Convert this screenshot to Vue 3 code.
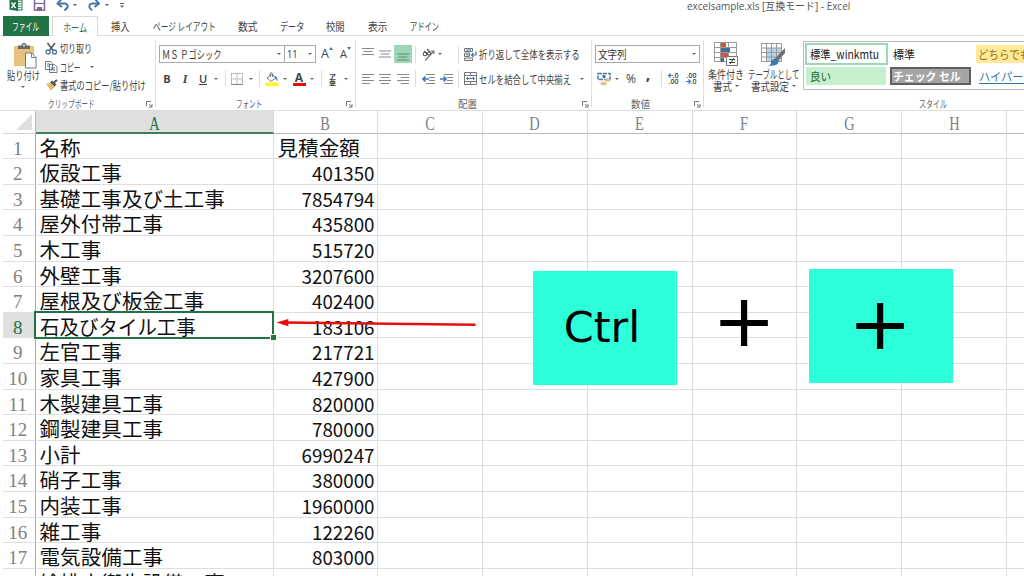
<script setup>
const vFit = {
  mounted(el, { value }) {
    const w = el.offsetWidth
    if (!w || !value) return
    el.style.transform = `scaleX(${value / w})`
    el.style.marginRight = `${value - w}px`
  }
}

const tabs = [
  { t: '挿入', w: 44, f: 19 },
  { t: 'ページ レイアウト', w: 84, f: 63 },
  { t: '数式', w: 44, f: 20 },
  { t: 'データ', w: 44, f: 24 },
  { t: '校閲', w: 43, f: 19 },
  { t: '表示', w: 42, f: 20 },
  { t: 'アドイン', w: 52, f: 29 }
]

const columns = ['A', 'B', 'C', 'D', 'E', 'F', 'G', 'H', '']
const rows = [
  ['名称', '見積金額'],
  ['仮設工事', '401350'],
  ['基礎工事及び土工事', '7854794'],
  ['屋外付帯工事', '435800'],
  ['木工事', '515720'],
  ['外壁工事', '3207600'],
  ['屋根及び板金工事', '402400'],
  ['石及びタイル工事', '183106', 156],
  ['左官工事', '217721'],
  ['家具工事', '427900'],
  ['木製建具工事', '820000'],
  ['鋼製建具工事', '780000'],
  ['小計', '6990247'],
  ['硝子工事', '380000'],
  ['内装工事', '1960000'],
  ['雑工事', '122260'],
  ['電気設備工事', '803000'],
  ['給排水衛生設備工事', '']
]
</script>

<template>
  <div class="app">
    <header class="titlebar">
      <svg class="quick" width="130" height="14" viewBox="0 0 130 14">
        <path d="M16 0h6v10h-6z" fill="#fff" stroke="#217346" />
        <path d="M17 2.500h4M17 5h4M17 7.500h4" stroke="#5a9a75" />
        <path d="M9.500 0H18v11L9.500 9.800z" fill="#217346" />
        <path d="M11.500 2.500l4 5.500M15.500 2.500l-4 5.500" stroke="#fff" stroke-width="1.300" />
        <path d="M34.500 -2h10v12h-10z" fill="#fff" stroke="#7d689b" stroke-width="1.500" />
        <path d="M35 3.500h9" stroke="#7d689b" stroke-width="1.300" />
        <path d="M37 7h5v4h-5z" fill="#7d689b" />
        <path d="M58 3.500h6.500q4 .5 3 4l-3 3" fill="none" stroke="#4275a8" stroke-width="1.900" />
        <path d="M61.500 -1L57.500 3.500l4.500 3.500" fill="none" stroke="#4275a8" stroke-width="1.900" />
        <path d="M98.500 3.500h-6q-4 .5 -3 4l2.500 3" fill="none" stroke="#4275a8" stroke-width="1.900" />
        <path d="M95 -1l4 4.500L94.500 7" fill="none" stroke="#4275a8" stroke-width="1.900" />
        <path d="M73 4h4l-2 2.300zM105 4h4l-2 2.300zM120 5.500h4l-2 2.300z" fill="#666" />
        <path d="M120 3.500h4" stroke="#666" />
      </svg>
      <div class="doc-title"><span v-fit="163" class="fit">excelsample.xls [互換モード] - Excel</span></div>
    </header>

    <nav class="tabs">
      <div class="tab file"><span v-fit="27" class="fit">ファイル</span></div>
      <div class="tab home"><span v-fit="24" class="fit">ホーム</span></div>
      <div v-for="tab in tabs" :key="tab.t" class="tab" :style="{ width: tab.w + 'px' }">
        <span v-fit="tab.f" class="fit">{{ tab.t }}</span>
      </div>
    </nav>

    <section class="ribbon">
      <div class="group clipboard">
        <div class="body clip-body">
          <div class="paste">
            <svg width="24" height="26" viewBox="0 0 24 26">
              <path d="M1 3h20v20H1z" fill="#e8c27c" />
              <path d="M5 2.500h3.500q0-2.500 2.500-2.500t2.500 2.500H17v3.500H5z" fill="#6a6a6a" />
              <circle cx="11" cy="2.500" r="1" fill="#fff" />
              <path d="M12.500 10h6l4.500 4.500V25H12.500z" fill="#fff" stroke="#777" />
              <path d="M18.500 10v4.500H23" fill="none" stroke="#777" />
            </svg>
            <span v-fit="33" class="fit">貼り付け</span>
            <i class="caret"></i>
          </div>
          <div class="clip-list">
            <div class="cmd">
              <svg width="13" height="13" viewBox="0 0 13 13">
                <path d="M2.500 1l6 8M10 1L4 9" stroke="#555" stroke-width="1.500" />
                <circle cx="3" cy="10" r="2" fill="none" stroke="#4275a8" stroke-width="1.300" />
                <circle cx="9.500" cy="10" r="2" fill="none" stroke="#4275a8" stroke-width="1.300" />
              </svg>
              <span v-fit="32" class="fit">切り取り</span>
            </div>
            <div class="cmd">
              <svg width="13" height="12" viewBox="0 0 13 12">
                <path d="M.5.5h5l2 2v6h-7zM4.500 3.500h5l2.500 2.500v5.500H4.500z" fill="#fff" stroke="#777" />
                <path d="M2 3h3M2 5h2M6 7h4M6 9h4" stroke="#4275a8" />
              </svg>
              <span v-fit="21" class="fit">コピー</span><i class="caret copy-caret"></i>
            </div>
            <div class="cmd">
              <svg width="13" height="12" viewBox="0 0 13 12">
                <path d="M1 5l4-1 5 4-4 3.500z" fill="#e8b965" />
                <path d="M5 3.500l2-2 4.500 4-2 2z" fill="#555" />
                <path d="M9 3.500L12 1" stroke="#555" stroke-width="2" />
              </svg>
              <span v-fit="86" class="fit">書式のコピー/貼り付け</span>
            </div>
          </div>
        </div>
        <div class="label"><span v-fit="47" class="fit">クリップボード</span></div>
        <svg class="launch" width="7" height="7" viewBox="0 0 7 7"><path d="M.5 5V.5H5M3 3l3 3M6 3v3H3" fill="none" stroke="#777" /></svg>
      </div>

      <div class="group font">
        <div class="body">
          <div class="row top">
            <div class="combo name"><span v-fit="59" class="fit">ＭＳ Ｐゴシック</span><i class="caret"></i></div>
            <div class="combo size"><span v-fit="11" class="fit">11</span><i class="caret"></i></div>
            <span class="grow">A<svg width="4" height="3" viewBox="0 0 4 3"><path d="M0 3l2-3 2 3z" fill="#4275a8" /></svg></span>
            <span class="shrink">A<svg width="4" height="3" viewBox="0 0 4 3"><path d="M0 0l2 3 2-3z" fill="#4275a8" /></svg></span>
          </div>
          <div class="row font-tools">
            <b>B</b><em>I</em><u>U</u><i class="caret"></i><i class="sep"></i>
            <svg width="12" height="12" viewBox="0 0 12 12"><path d="M.5 1v10M6 1v10M11.500 1v10M0 .5h12M0 6h12" fill="none" stroke="#aaa" stroke-dasharray="1.500 .5" /><path d="M0 11.400h12" stroke="#777" /></svg>
            <i class="caret"></i><i class="sep"></i>
            <svg width="14" height="14" viewBox="0 0 14 14">
              <path d="M2 6l5-4 3.500 4L6 9.500z" fill="#fff" stroke="#777" /><path d="M5 5V1.500Q6-.5 7.500 1.500V5" fill="none" stroke="#777" />
              <path d="M9.500 4q3 0 3 5l-2-2z" fill="#4275a8" /><path d="M.5 10.500h13v3.500H.5z" fill="#fff21e" />
            </svg>
            <i class="caret"></i>
            <span class="font-color">A</span>
            <i class="caret"></i><i class="sep"></i>
            <span class="ruby"><span>ア</span><span>亜</span></span>
            <i class="caret"></i>
          </div>
        </div>
        <div class="label"><span v-fit="26" class="fit">フォント</span></div>
        <svg class="launch" width="7" height="7" viewBox="0 0 7 7"><path d="M.5 5V.5H5M3 3l3 3M6 3v3H3" fill="none" stroke="#777" /></svg>
      </div>

      <div class="group align">
        <div class="body">
          <div class="row align-top">
            <svg width="12" height="14" viewBox="0 0 12 14"><path d="M0 1.500h12M1.500 4.500h9M0 7.500h12" stroke="#888" stroke-width="1.100" /></svg>
            <svg width="12" height="14" viewBox="0 0 12 14"><path d="M0 4h12M1.500 7h9M0 10h12" stroke="#888" stroke-width="1.100" /></svg>
            <div class="pressed"><svg width="12" height="14" viewBox="0 0 12 14"><path d="M0 7h12M1.500 10h9M0 13h12" stroke="#5f8a71" stroke-width="1.100" /></svg></div>
            <i class="sep"></i>
            <svg width="13" height="13" viewBox="0 0 13 13"><path d="M3 12.500L12 3M9 3h3v3" fill="none" stroke="#777" stroke-width="1.200" /><circle cx="3" cy="6" r="1.800" fill="none" stroke="#555" stroke-width="1.100" /><path d="M2 3l4 4M5 1l4 4" stroke="#555" stroke-width="1.100" /><circle cx="7" cy="5.500" r="1.500" fill="none" stroke="#555" /></svg>
            <i class="caret"></i><i></i><i class="sep"></i>
            <svg width="13" height="13" viewBox="0 0 13 13"><path d="M.5.500h8v3h-8zM.5 5h5v3.500h-5zM.5 10h8v2.500h-8z" fill="#eef3f8" stroke="#777" /><path d="M2 2h5M2 6.800h3" stroke="#4275a8" /><path d="M12 3.500v3.500H7.500M9.500 5l-2 2 2 2" fill="none" stroke="#4275a8" stroke-width="1.200" /></svg>
            <span class="left"><span v-fit="101" class="fit">折り返して全体を表示する</span></span>
          </div>
          <div class="row align-bottom">
            <svg width="12" height="12" viewBox="0 0 12 12"><path d="M0 1.500h12M0 4.500h8M0 7.500h12M0 10.500h8" stroke="#888" stroke-width="1.100" /></svg>
            <svg width="12" height="12" viewBox="0 0 12 12"><path d="M0 1.500h12M2 4.500h8M0 7.500h12M2 10.500h8" stroke="#888" stroke-width="1.100" /></svg>
            <svg width="12" height="12" viewBox="0 0 12 12"><path d="M0 1.500h12M4 4.500h8M0 7.500h12M4 10.500h8" stroke="#888" stroke-width="1.100" /></svg>
            <i class="sep"></i>
            <svg width="13" height="12" viewBox="0 0 13 12"><path d="M4 1.500h9M7 4.500h6M7 7.500h6M4 10.500h9" stroke="#888" /><path d="M7 6H1M3.500 3.500L1 6l2.500 2.500" fill="none" stroke="#3b78b5" stroke-width="1.600" /></svg>
            <svg width="13" height="12" viewBox="0 0 13 12"><path d="M4 1.500h9M7 4.500h6M7 7.500h6M4 10.500h9" stroke="#888" /><path d="M0 6h6M3.500 3.500L6 6 3.500 8.500" fill="none" stroke="#3b78b5" stroke-width="1.600" /></svg>
            <i class="sep"></i>
            <svg width="13" height="13" viewBox="0 0 13 13"><path d="M.5.5h12v12H.5zM.5 3.500h12M.5 9.500h12M6.500.5v3M6.500 9.500v3" fill="none" stroke="#777" /><path d="M2.500 6.500h8M4 5L2.500 6.500 4 8M9 5l1.500 1.500L9 8" fill="none" stroke="#4275a8" /></svg>
            <span class="left"><span v-fit="92" class="fit">セルを結合して中央揃え</span></span>
            <i class="caret"></i>
          </div>
        </div>
        <div class="label"><span v-fit="19" class="fit">配置</span></div>
        <svg class="launch" width="7" height="7" viewBox="0 0 7 7"><path d="M.5 5V.5H5M3 3l3 3M6 3v3H3" fill="none" stroke="#777" /></svg>
      </div>

      <div class="group number">
        <div class="body">
          <div class="row top"><div class="combo format"><span v-fit="29" class="fit">文字列</span><i class="caret"></i></div></div>
          <div class="row number-tools">
            <svg width="14" height="14" viewBox="0 0 14 14"><path d="M1 1.500h12v6H1z" fill="#fff" stroke="#4275a8" stroke-width="1.500" stroke-dasharray="4 1" /><circle cx="7" cy="4.500" r="1.700" fill="#4275a8" /><ellipse cx="10.500" cy="8" rx="2.800" ry="1.700" fill="#e9bd73" /><ellipse cx="6.500" cy="11.500" rx="3" ry="1.800" fill="#e9bd73" /></svg>
            <i class="caret"></i><span class="percent">%</span><span class="comma">,</span><i class="sep"></i>
            <span class="dec"><span><svg width="5" height="5" viewBox="0 0 5 5"><path d="M5 2.500H.5M2.500.5l-2 2 2 2" fill="none" stroke="#3b78b5" stroke-width="1.200" /></svg>.0</span><span>.00</span></span>
            <span class="dec"><span>.00</span><span><svg width="5" height="5" viewBox="0 0 5 5"><path d="M0 2.500h4.500M2.500.5l2 2-2 2" fill="none" stroke="#3b78b5" stroke-width="1.200" /></svg>.0</span></span>
          </div>
        </div>
        <div class="label"><span v-fit="19" class="fit">数値</span></div>
        <svg class="launch" width="7" height="7" viewBox="0 0 7 7"><path d="M.5 5V.5H5M3 3l3 3M6 3v3H3" fill="none" stroke="#777" /></svg>
      </div>

      <div class="group styles">
        <div class="body styles-body">
          <div class="big cond">
            <svg width="25" height="25" viewBox="0 0 25 25">
              <path d="M.5.5h22v19H.5zM.5 5.500h22M.5 10.500h22M.5 15.500h22M6.500.5v19M14.500.5v19" fill="#fff" stroke="#999" />
              <path d="M7 1h5v4H7zM7 11h7v4H7z" fill="#d65532" /><path d="M7 6h9v4H7zM7 16h3v4H7z" fill="#3d6fa5" />
              <path d="M12.500 14.500h11v9h-11z" fill="#fff" stroke="#777" /><path d="M15 17.500h6M15 20.500h6M20 16l-4 6" stroke="#444" />
            </svg>
            <span v-fit="36" class="fit">条件付き</span>
            <div class="line2"><span v-fit="19" class="fit">書式</span><i class="caret"></i></div>
          </div>
          <div class="big table">
            <svg width="25" height="25" viewBox="0 0 25 25">
              <path d="M.5 1.500h20v18H.5z" fill="#fff" /><path d="M5.500 6h15v13.500h-15z" fill="#b8d3e9" />
              <path d="M.5 1.500h20v18H.5zM.5 6h20M.5 10.500h20M.5 15h20M5.500 1.500v18M10.500 1.500v18M15.500 1.500v18" fill="none" stroke="#999" />
              <path d="M24 6v5l-8 9-3-2.500z" fill="#707070" /><path d="M14 16.500q4 .5 3.500 4-2 4-10.500 3 3-.5 3-3t4-4z" fill="#3d78b2" />
            </svg>
            <span v-fit="51" class="fit">テーブルとして</span>
            <div class="line2"><span v-fit="38" class="fit">書式設定</span><i class="caret"></i></div>
          </div>
          <div class="gallery">
            <div class="swatch current"><span v-fit="69" class="fit">標準_winkmtu</span></div>
            <div class="swatch"><span v-fit="22" class="fit">標準</span></div>
            <div class="swatch neutral"><span v-fit="52" class="fit">どちらでも</span></div>
            <div class="swatch good"><span v-fit="21" class="fit">良い</span></div>
            <div class="swatch check"><span v-fit="68" class="fit">チェック セル</span></div>
            <div class="swatch link"><span v-fit="45" class="fit">ハイパー</span></div>
          </div>
        </div>
        <div class="label"><span v-fit="28" class="fit">スタイル</span></div>
      </div>
    </section>

    <main class="sheet">
      <div class="grid-row head">
        <div class="corner"><svg width="16" height="16" viewBox="0 0 16 16"><path d="M16 0v16H0z" fill="#dfdfdf" /></svg></div>
        <div v-for="(c, i) in columns" :key="i" class="col-head" :class="{ selected: i === 0 }"><span>{{ c }}</span></div>
      </div>
      <div v-for="(r, i) in rows" :key="i" class="grid-row">
        <div class="row-head" :class="{ selected: i === 7 }">{{ i < 17 ? i + 1 : '' }}</div>
        <div class="cell name-cell" :class="{ current: i === 7 }"><span v-fit="r[2]" class="fit">{{ r[0] }}</span></div>
        <div class="cell" :class="i ? 'amount' : 'name-cell'"><span>{{ r[1] }}</span></div>
        <div v-for="n in 7" :key="n" class="cell"></div>
      </div>
    </main>

    <svg class="arrow" width="204" height="12" viewBox="0 0 204 12">
      <path d="M12 5.500L203.500 7.700" stroke="#e51010" stroke-width="2.400" />
      <path d="M4.500 5.500L16.300 2v7.300z" fill="#f00808" />
    </svg>
    <div class="key ctrl">Ctrl</div>
    <div class="plus"><span>+</span></div>
    <div class="key plus-key"><span>+</span></div>
  </div>
</template>

<style>
html, body { margin: 0; overflow: hidden; background: #fff; }
</style>

<style scoped>
* { box-sizing: border-box; }
.app {
  position: relative; width: 1024px; height: 576px; overflow: hidden; background: #fff;
  font-family: "Noto Sans CJK JP", sans-serif; font-size: 11.5px; line-height: 12px; color: #444;
}
svg { display: block; flex: none; }
.fit { display: inline-block; white-space: nowrap; transform-origin: 0 50%; flex: none; }
.caret { width: 0; height: 0; flex: none; border: 2px solid transparent; border-top: 2.5px solid #666; border-bottom: 0; }

.titlebar { height: 16px; display: flex; }
.doc-title { margin-left: 557px; font-family: "Open Sans", "Noto Sans CJK JP", sans-serif; font-size: 10.5px; color: #555; }

.tabs { height: 20px; display: flex; padding-left: 3px; border-bottom: 1px solid #dedede; }
.tab { display: flex; justify-content: center; align-items: center; height: 20px; font-size: 10.8px; }
.file { width: 46px; background: #217346; color: #fff; }
.home { width: 46px; margin-left: 3px; border: 1px solid #dadada; border-bottom: 0; background: #fff; color: #217346; }

.ribbon { height: 75px; display: flex; padding-left: 3px; border-bottom: 1px solid #dcdcdc; }
.group { position: relative; flex: none; height: 74px; display: flex; flex-direction: column; }
.group::after { content: ""; position: absolute; right: 0; top: 4px; bottom: 3px; width: 1px; background: #dfdfdf; }
.clipboard { width: 153px; }
.font { width: 200px; }
.align { width: 236px; }
.number { width: 112px; }
.styles { width: 321px; }
.styles::after { display: none; }
.body { height: 61px; flex: none; }
.label { display: flex; justify-content: center; font-size: 10.5px; line-height: 14px; height: 14px; color: #666; padding-right: 16px; }
.launch { position: absolute; right: 3px; bottom: 2px; }
.align .label { padding-right: 14px; }
.styles .label { padding: 0 0 0 137px; }
.font .label { padding-right: 14px; }

.clip-body { display: flex; }
.paste { width: 40px; display: flex; flex-direction: column; align-items: center; padding-top: 7px; }
.paste > svg { margin-left: 3px; }
.paste .fit { align-self: flex-start; margin: 0 0 0 4px; line-height: 13px; }
.paste .caret { margin-top: 4px; }
.clip-list { padding: 3px 0 0 2px; display: flex; flex-direction: column; }
.cmd { height: 18.500px; display: flex; align-items: center; }
.cmd svg { width: 13px; margin-right: 2px; }
.copy-caret { margin-left: 9px; }

.row { display: flex; align-items: center; }
.top { padding: 9px 0 0 3px; height: 27px; }
.combo { flex: none; height: 18px; border: 1px solid #aaa; display: flex; align-items: center; justify-content: space-between; padding: 0 3.500px 0 2px; color: #333; }
.name { width: 126px; font-size: 11px; }
.size { width: 32px; margin-left: -1px; font-family: "Open Sans", sans-serif; font-size: 11px; }
.format { width: 105px; }
.grow, .shrink { display: flex; font-family: "Open Sans", sans-serif; }
.grow { margin-left: 5px; font-size: 12.500px; }
.shrink { margin-left: 7px; font-size: 11px; }
.grow svg, .shrink svg { margin-top: -1px; }
.row > i { justify-self: center; }
.sep { width: 1px; height: 17px; background: #ddd; }
.font-tools, .align-top, .align-bottom, .number-tools { display: grid; justify-items: center; align-items: center; }
.font-tools { height: 31px; padding: 0 0 0 2px; grid-template-columns: 18px 18px 18px 8px 10px 14px 13px 5px 19px 8px 20px 6px 12px 11px 16px; }
.font-tools b, .font-tools em, .font-tools u { font-family: "Open Sans", sans-serif; font-size: 11px; }
.font-tools u { font-weight: 600; }
.font-tools em { font-family: "Liberation Serif", serif; font-size: 12px; font-weight: bold; }
.font-color { width: 13px; height: 14px; text-align: center; font: bold 12px/11px "Open Sans", sans-serif; border-bottom: 3px solid #ea0c0c; }
.ruby { display: flex; flex-direction: column; font-size: 7px; line-height: 6px; font-weight: bold; }

.align-top { padding: 9px 0 0 4px; height: 27px; grid-template-columns: 16px 18px 18px 7px 18px 5px 13px 6px 18px 102px; }
.align-bottom { height: 31px; padding-left: 4px; grid-template-columns: 16px 18px 18px 7px 18px 18px 6px 18px 102px 6px; }
.align-bottom .caret { margin-left: -4px; }
.pressed { width: 18px; height: 18px; background: #9fd5b7; display: flex; align-items: center; justify-content: center; }
.left { justify-self: start; display: flex; }

.number-tools { height: 31px; padding-left: 3px; grid-template-columns: 18px 8px 20px 14px 12px 12px 24px; }
.percent { font: 12px/12px "Open Sans", sans-serif; }
.comma { font: bold 16px/8px "Open Sans", sans-serif; margin-top: -10px; }
.dec { display: flex; flex-direction: column; align-items: flex-end; font: 600 7px/6px "Open Sans", sans-serif; }
.dec span { display: flex; align-items: center; }

.styles-body { display: flex; }
.big { display: flex; flex-direction: column; align-items: center; padding-top: 6px; line-height: 12px; }
.big > svg { margin-bottom: 1px; }
.big > .fit { align-self: flex-start; }
.cond { width: 37px; margin-left: 4px; }
.table { width: 53px; margin-left: 4px; }
.line2 { display: flex; align-items: center; gap: 3px; }
.gallery {
  width: 240px; height: 49px; margin: 5px 0 0 4px; padding: 1px 0 0 1px; border: 1px solid #bbb;
  display: grid; grid-template-columns: 83px 84px 84px; grid-template-rows: 22px 23px; overflow: hidden;
}
.swatch { display: flex; align-items: center; padding-left: 5px; font-size: 11.5px; color: #222; }
.current.swatch { border: 2px solid #9fd5b7; padding-left: 3px; }
.neutral { background: #ffe999; color: #9c6c10; margin: 2px 0 2px 4px; padding-left: 2px; }
.good { background: #c6efce; color: #17692b; margin: 2px 2px 3px 1px; padding-left: 4px; }
.check { background: #a5a5a5; color: #fff; border: 2px solid #606060; margin: 2px 1px 3px 2px; padding-left: 1px; font-weight: bold; }
.link { color: #2e75a8; padding-left: 7px; }
.link .fit { border-bottom: 1px solid #2e75a8; line-height: 13px; }

.sheet { padding-left: 3px; background: #fff; }
.grid-row { display: grid; grid-template-columns: 32.500px 238px 104.500px repeat(7, 104.850px); grid-template-rows: 100%; height: 25.600px; }
.head { height: 22.600px; }
.corner { display: flex; justify-content: flex-end; align-items: flex-end; padding: 0 2.500px 3px 0; border-bottom: 1px solid #d5d5d5; border-right: 1px solid #bbb; }
.col-head { border-right: 1px solid #dcdcdc; border-bottom: 1px solid #bbb; text-align: center; font: 18px/27px "Liberation Serif", serif; color: #808080; overflow: hidden; }
.col-head span { display: inline-block; transform: scaleX(.8); }
.col-head.selected { background: #dfdfdf; color: #217346; border-bottom: 2px solid #3c8059; }
.row-head { border-right: 1px solid #aaa; border-bottom: 1px solid #e0e0e0; text-align: center; font: 19px/30px "Liberation Serif", serif; color: #808080; padding-right: 2px; overflow: hidden; }
.row-head.selected { background: #dfdfdf; color: #217346; }
.cell { position: relative; min-width: 0; border-right: 1px solid #dedede; border-bottom: 1px solid #dedede; color: #111; white-space: nowrap; }
.name-cell { font-size: 20.500px; line-height: 27px; letter-spacing: .1px; padding-left: 4px; }
.amount { text-align: right; font-size: 18.800px; line-height: 27px; padding-right: 2.500px; }
.cell.current::before { content: ""; position: absolute; left: -1.500px; top: -2px; right: -1.500px; bottom: -1.500px; border: 2px solid #217346; }
.cell.current::after { content: ""; position: absolute; right: -3px; bottom: -3px; width: 5px; height: 5px; background: #217346; border: solid #fff; border-width: 1px 0 0 1px; }
.cell.current { z-index: 1; }

.arrow { position: absolute; z-index: 2; left: 272px; top: 317px; }
.key { position: absolute; z-index: 2; width: 144px; height: 114px; background: #2dffdb; color: #000; display: flex; justify-content: center; align-items: center; font-family: "DejaVu Sans", sans-serif; }
.ctrl { left: 532.500px; top: 271px; font-size: 43px; padding: 0 5px 3px 0; }
.plus-key { left: 809px; top: 268.700px; font-size: 76px; }
.plus { position: absolute; left: 672px; top: 264px; width: 144px; height: 114px; display: flex; justify-content: center; align-items: center; font: 76px "DejaVu Sans", sans-serif; color: #000; }
.plus span { line-height: 76px; transform: scaleY(.95); }
.plus-key span { line-height: 76px; transform: translate(-1px, -2px) scaleY(.95); }
</style>
